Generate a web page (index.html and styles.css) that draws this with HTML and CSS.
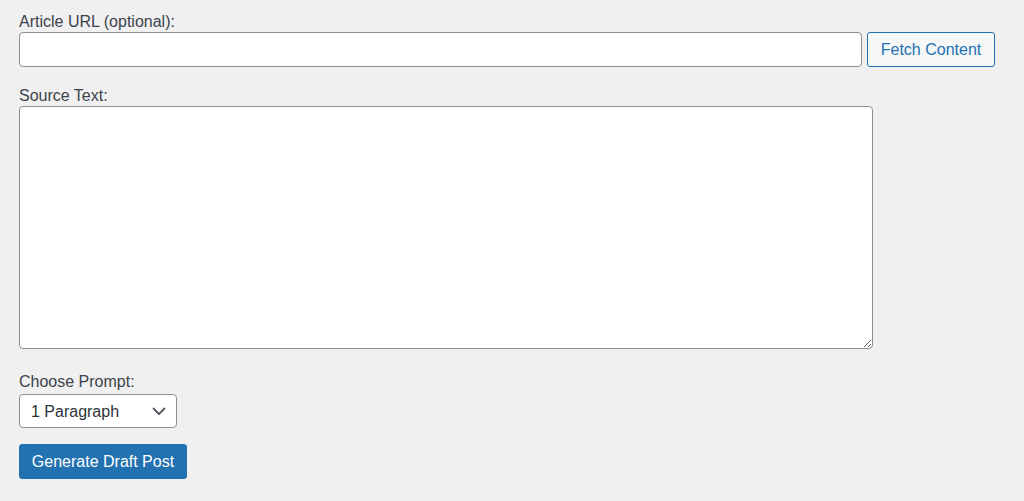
FILE: index.html
```html
<!DOCTYPE html>
<html>
<head>
<meta charset="utf-8">
<link rel="stylesheet" href="styles.css">
</head>
<body>
<form class="form">
  <label class="label label-first" for="url">Article URL (optional):</label>
  <div class="url-row">
    <input class="input url-input" id="url" type="text">
    <button type="button" class="btn btn-secondary">Fetch Content</button>
  </div>
  <label class="label label-source" for="src">Source Text:</label>
  <textarea class="textarea" id="src"></textarea>
  <label class="label label-prompt" for="prompt">Choose Prompt:</label>
  <div class="select-wrap">
    <select class="select" id="prompt">
      <option>1 Paragraph</option>
    </select>
    <svg class="chevron" width="14" height="9" viewBox="0 0 14 9"><path d="M1.5 1.5 L7 7 L12.5 1.5" fill="none" stroke="#50575e" stroke-width="1.8" stroke-linecap="round" stroke-linejoin="round"/></svg>
  </div>
  <button type="button" class="btn btn-primary">Generate Draft Post</button>
</form>
</body>
</html>
```
FILE: styles.css
```css
html, body {
  margin: 0;
  padding: 0;
  background: #f0f0f1;
}
body {
  font-family: "Liberation Sans", Arial, sans-serif;
  font-size: 16px;
  color: #3c434a;
}
.form {
  display: flex;
  flex-direction: column;
  align-items: flex-start;
  padding: 12px 0 0 19px;
}
.label {
  display: block;
  line-height: 20px;
  height: 20px;
  color: #3c434a;
}
.url-row {
  display: flex;
  gap: 5px;
  margin-top: 0;
}
.input, .textarea, .select {
  box-sizing: border-box;
  background: #fff;
  border: 1px solid #8c8f94;
  border-radius: 4px;
  font-family: inherit;
  font-size: 16px;
  color: #2c3338;
  margin: 0;
}
.url-input {
  width: 843px;
  height: 35px;
  padding: 0 8px;
}
.btn {
  box-sizing: border-box;
  font-family: inherit;
  font-size: 16px;
  border-radius: 3px;
  cursor: pointer;
  margin: 0;
  line-height: 1;
}
.btn-secondary {
  width: 128px;
  height: 35px;
  border: 1px solid #2271b1;
  background: #f6f7f7;
  color: #2271b1;
  padding: 0;
}
.label-source {
  margin-top: 19px;
}
.textarea {
  display: block;
  width: 854px;
  height: 243px;
  resize: both;
  margin-top: 0;
}
.label-prompt {
  margin-top: 23px;
}
.select-wrap {
  position: relative;
  margin-top: 2px;
}
.select {
  -webkit-appearance: none;
  appearance: none;
  width: 158px;
  height: 34px;
  padding: 0 30px 0 11px;
  display: block;
}
.chevron {
  position: absolute;
  right: 11px;
  top: 13px;
  pointer-events: none;
}
.btn-primary {
  margin-top: 16px;
  width: 168px;
  height: 35px;
  background: #2271b1;
  border: 1px solid #2271b1;
  color: #fff;
  padding: 0;
}
```
